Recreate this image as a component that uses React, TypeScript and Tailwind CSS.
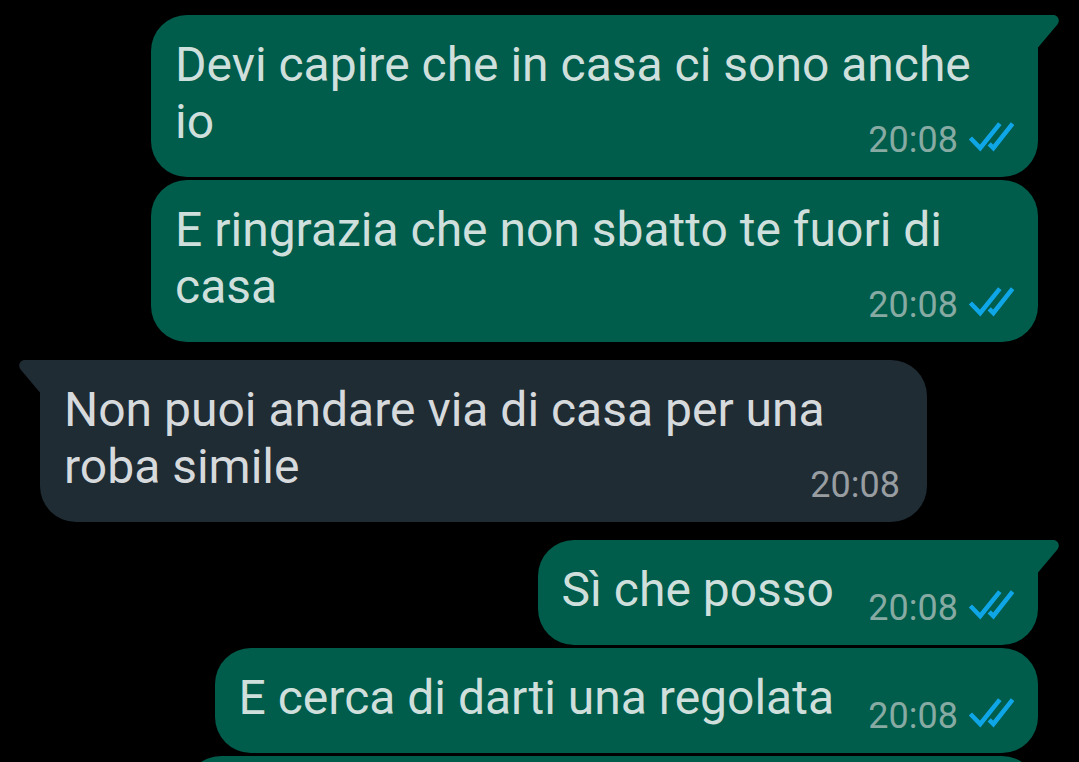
type Message = {
  text: string;
  time: string;
  outgoing: boolean;
  first: boolean;
};

const messages: Message[] = [
  { text: "Devi capire che in casa ci sono anche io", time: "20:08", outgoing: true, first: true },
  { text: "E ringrazia che non sbatto te fuori di casa", time: "20:08", outgoing: true, first: false },
  { text: "Non puoi andare via di casa per una roba simile", time: "20:08", outgoing: false, first: true },
  { text: "Sì che posso", time: "20:08", outgoing: true, first: true },
  { text: "E cerca di darti una regolata", time: "20:08", outgoing: true, first: false },
];

function ReadTicks() {
  return (
    <svg
      role="img"
      aria-label="Letto"
      viewBox="0 0 46 31"
      className="mb-[9px] h-[31px] w-[46px]"
      fill="none"
      stroke="#0fa6e8"
      strokeWidth="4.5"
    >
      <path d="M2.4 17 12.2 27 31.8 2.6" />
      <path d="M21.2 22.8 25.4 27 44.6 2.6" />
    </svg>
  );
}

function Tail({ outgoing }: { outgoing: boolean }) {
  return (
    <svg
      aria-hidden="true"
      viewBox="0 0 22 33"
      className={
        outgoing
          ? "absolute top-0 -right-[21px] h-[33px] w-[22px] text-[#005c4b]"
          : "absolute top-0 -left-[21px] h-[33px] w-[22px] -scale-x-100 text-[#1f2c34]"
      }
      fill="currentColor"
    >
      <path d="M0 0H16C21 0 23.5 5.5 20.4 9.4L1 32.5H0Z" />
    </svg>
  );
}

function Bubble({ text, time, outgoing, first }: Message) {
  const side = outgoing
    ? "self-end bg-[#005c4b] pr-6 text-[#cfdfdc]"
    : "self-start bg-[#1f2c34] pr-[27px] text-[#d7dadc]";
  const corner = first ? (outgoing ? "rounded-tr-none" : "rounded-tl-none") : "";
  const spacing = first ? "mt-[18px] first:mt-0" : "mt-[3px]";
  return (
    <li
      className={`relative grid max-w-[calc(100%-111px)] rounded-[36px] pt-[21px] pb-[27px] pl-6 ${side} ${corner} ${spacing}`}
    >
      {first && <Tail outgoing={outgoing} />}
      <p className="col-start-1 row-start-1 text-[48px] leading-[57px]">
        {text}
        <span className={outgoing ? "inline-block w-[180px]" : "inline-block w-[122px]"} />
      </p>
      <div
        className={`col-start-1 row-start-1 -mb-[11px] flex items-end gap-[10px] self-end justify-self-end text-[36px] leading-[42px] ${
          outgoing ? "text-[#87aaa3]" : "text-[#989da1]"
        }`}
      >
        <time>{time}</time>
        {outgoing && <ReadTicks />}
      </div>
    </li>
  );
}

export default function App() {
  return (
    <main className="h-screen overflow-hidden bg-black pt-[15px] pr-[41px] pl-10 font-[Roboto,sans-serif]">
      <ul className="flex flex-col">
        {messages.map((message) => (
          <Bubble key={message.text} {...message} />
        ))}
        <li className="mt-[3px] h-[105px] w-[853px] max-w-full self-end rounded-[36px] bg-[#005c4b]" />
      </ul>
    </main>
  );
}
